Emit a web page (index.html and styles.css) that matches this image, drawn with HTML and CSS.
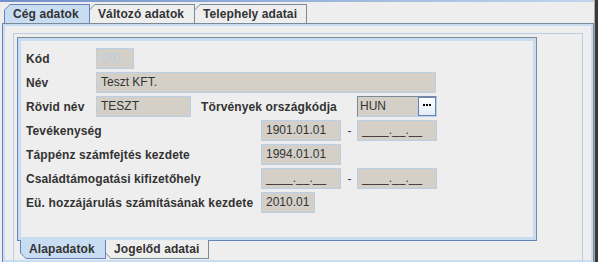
FILE: index.html
```html
<!DOCTYPE html>
<html>
    <head>
        <title>Cég adatok</title>
        <link rel="stylesheet" href="styles.css">
    </head>
    <body>
        <div class="window">
            <div class="main">
                <div class="topline"></div>
                <div class="tabs">
                    <div class="tab selected w-ceg"><div class="tab-face">Cég adatok</div></div>
                    <div class="tab w-valt"><div class="tab-face">Változó adatok</div></div>
                    <div class="tab w-tel"><div class="tab-face">Telephely adatai</div></div>
                </div>
                <div class="outer-pane">
                    <div class="etched">
                        <div class="inner-pane">
                            <div class="form">
                                <div class="row">
                                    <div class="label short">Kód</div>
                                    <div class="field disabled w-kod">001</div>
                                </div>
                                <div class="row">
                                    <div class="label short">Név</div>
                                    <div class="field w-nev">Teszt KFT.</div>
                                </div>
                                <div class="row">
                                    <div class="label short">Rövid név</div>
                                    <div class="field w-rovid">TESZT</div>
                                    <div class="label mid">Törvények országkódja</div>
                                    <div class="combo">
                                        <div class="combo-text">HUN</div>
                                        <div class="combo-btn">
                                            <svg width="9" height="2" viewBox="0 0 9 2"><rect x="0" y="0" width="2" height="2" fill="#000"/><rect x="3" y="0" width="2" height="2" fill="#000"/><rect x="6" y="0" width="2" height="2" fill="#000"/></svg>
                                        </div>
                                    </div>
                                </div>
                                <div class="row">
                                    <div class="label long">Tevékenység</div>
                                    <div class="field w-date">1901.01.01</div>
                                    <div class="dash">-</div>
                                    <div class="field w-date">____.__.__</div>
                                </div>
                                <div class="row">
                                    <div class="label long">Táppénz számfejtés kezdete</div>
                                    <div class="field w-date">1994.01.01</div>
                                </div>
                                <div class="row">
                                    <div class="label long">Családtámogatási kifizetőhely</div>
                                    <div class="field w-date">____.__.__</div>
                                    <div class="dash">-</div>
                                    <div class="field w-date">____.__.__</div>
                                </div>
                                <div class="row">
                                    <div class="label long">Eü. hozzájárulás számításának kezdete</div>
                                    <div class="field w-ho">2010.01</div>
                                </div>
                            </div>
                        </div>
                        <div class="bottom-tabs">
                            <div class="btab selected w-alap"><div class="btab-face">Alapadatok</div></div>
                            <div class="btab w-jog"><div class="btab-face">Jogelőd adatai</div></div>
                        </div>
                    </div>
                </div>
            </div>
            <div class="edge"></div>
        </div>
    </body>
</html>
```

FILE: styles.css
```css
body{
    margin: 0;
    width: 598px;
    height: 262px;
    overflow: hidden;
    background: #eeeeee;
    font-family: "Liberation Sans", Arial, sans-serif;
    font-size: 12px;
    color: #333333;
}

.window{
    display: flex;
    height: 262px;
}

.main{
    width: 594px;
    display: flex;
    flex-direction: column;
}

.edge{
    width: 4px;
    background: #3a3a3a;
    border-left: 1px solid #a8a8a8;
    box-sizing: border-box;
}

.topline{
    height: 2px;
    background: linear-gradient(to right, #7090c8, #c0d6ee);
}

/* top tabs */
.tabs{
    display: flex;
    padding: 2px 0 0 4px;
    height: 19px;
}

.tab{
    height: 19px;
    box-sizing: border-box;
    padding: 1px 1px 0 1px;
    margin-right: -1px;
    background: #7a8a99;
    clip-path: polygon(6px 0, 100% 0, 100% 100%, 0 100%, 0 6px);
}

.tab-face{
    height: 18px;
    line-height: 18px;
    padding-left: 8px;
    font-weight: bold;
    letter-spacing: 0.1px;
    background: #eeeeee;
    clip-path: polygon(5px 0, 100% 0, 100% 100%, 0 100%, 0 5px);
}

.tab.selected{
    background: #6382bf;
    position: relative;
    z-index: 1;
}

.tab.selected .tab-face{
    background: #c8ddf2;
}

.w-ceg{ width: 86px; }
.w-valt{ width: 106px; }
.w-tel{ width: 113px; }

/* panes */
.outer-pane{
    margin-left: 2px;
    flex: 1;
    border: 1px solid #7a8a99;
    border-left-color: #6382bf;
    border-bottom: none;
    box-shadow: inset 0 0 0 2px #c8ddf2;
    padding: 9px 10px 0 10px;
}

.etched{
    height: 100%;
    border: 1px solid #b8cfe5;
    border-bottom: none;
    padding: 3px;
}

.inner-pane{
    width: 520px;
    height: 204px;
    box-sizing: border-box;
    border: 1px solid #7a8a99;
    border-left-color: #6382bf;
    border-bottom-color: #6382bf;
    box-shadow: inset 0 0 0 3px #c8ddf2;
    padding: 10px 8px;
}

.form{
    display: flex;
    flex-direction: column;
    gap: 3px;
}

.row{
    display: flex;
    align-items: center;
    height: 21px;
}

.label{
    font-weight: bold;
    letter-spacing: 0.12px;
    white-space: nowrap;
}

.short{ width: 70px; }
.long{ width: 235px; }

.mid{
    width: 156px;
    padding-left: 10px;
}

.field{
    height: 21px;
    line-height: 19px;
    box-sizing: border-box;
    border: 1px solid #b8cfe5;
    background: #d4d0c8;
    padding-left: 4px;
    white-space: nowrap;
    overflow: hidden;
}

.disabled{
    color: #b8cfe5;
    padding-left: 5px;
}

.w-kod{ width: 38px; }
.w-nev{ width: 340px; }
.w-rovid{ width: 95px; }
.w-date{ width: 80px; }
.w-ho{ width: 54px; }

.dash{
    width: 15px;
    padding-left: 1px;
    text-align: center;
}

.combo{
    display: flex;
    width: 80px;
    height: 21px;
    box-sizing: border-box;
    border: 1px solid #7a8a99;
    border-right-color: #b8cfe5;
    border-bottom-color: #b8cfe5;
}

.combo-text{
    flex: 1;
    background: #d4d0c8;
    line-height: 19px;
    padding-left: 2px;
}

.combo-btn{
    width: 18px;
    box-sizing: border-box;
    border: 1px solid #6382bf;
    background: linear-gradient(#ffffff, #e4edf7);
    display: flex;
    justify-content: center;
    padding-top: 6px;
}

/* bottom tabs */
.bottom-tabs{
    display: flex;
    padding-left: 3px;
    margin-top: -1px;
}

.btab{
    height: 19px;
    box-sizing: border-box;
    padding: 0 1px 1px 1px;
    margin-right: -1px;
    background: #7a8a99;
    clip-path: polygon(0 0, 100% 0, 100% 100%, 6px 100%, 0 calc(100% - 6px));
}

.btab-face{
    height: 18px;
    line-height: 18px;
    padding-left: 8px;
    font-weight: bold;
    letter-spacing: 0.1px;
    background: #eeeeee;
    clip-path: polygon(0 0, 100% 0, 100% 100%, 5px 100%, 0 calc(100% - 5px));
}

.btab.selected{
    background: #6382bf;
    position: relative;
    z-index: 1;
}

.btab.selected .btab-face{
    background: #c8ddf2;
}

.w-alap{ width: 86px; }
.w-jog{ width: 104px; }
```
